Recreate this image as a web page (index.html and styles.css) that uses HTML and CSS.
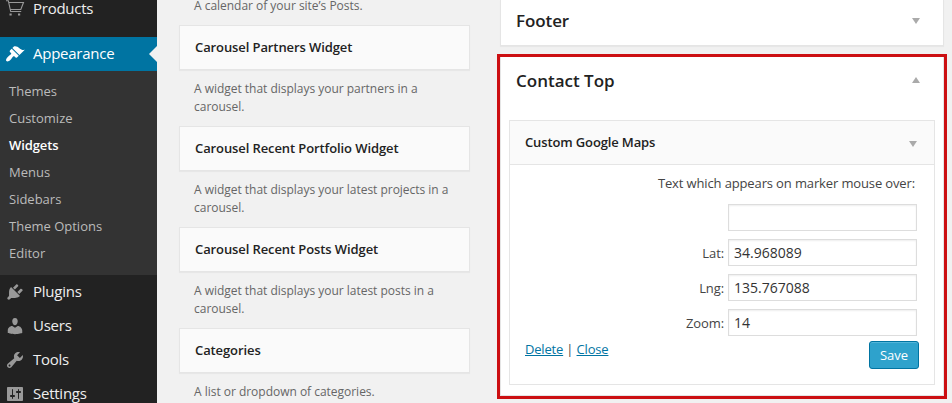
FILE: index.html
```html
<!DOCTYPE html>
<html lang="en">
<head>
<meta charset="utf-8">
<title>Widgets</title>
<link rel="stylesheet" href="styles.css">
</head>
<body>
<div class="app">
  <nav class="sidebar">
    <a class="item item-products">
      <svg class="icon" viewBox="0 0 20 20"><path class="line" d="M1 1.700h2.300l2.400 10.800h10.500M4 3.500h14.500l-2.700 7H5.500"/><rect x="4.500" y="14.500" width="2.200" height="2"/><rect x="13" y="14.500" width="2.200" height="2"/></svg>
      <span>Products</span>
    </a>
    <a class="item current">
      <svg class="icon" viewBox="0 0 20 20"><path d="M14.480 11.060L7.410 3.990l1.500-1.500c.5-.56 2.300-.47 3.510.32 1.210.8 1.430 1.280 2.910 2.100 1.180.64 2.450 1.260 4.450.85zm-.71.71L6.700 4.700 4.930 6.470c-.39.39-.39 1.020 0 1.410l1.060 1.060c.39.39.39 1.030 0 1.420-.6.6-1.430 1.110-2.210 1.690-.35.26-.7.53-1.010.84C1.430 14.230.4 16.080 1.400 17.070c.99 1 2.840-.03 4.180-1.360.31-.31.580-.66.850-1.020.57-.78 1.080-1.610 1.690-2.210.39-.39 1.020-.39 1.410 0l1.060 1.060c.39.39 1.020.39 1.410 0z"/></svg>
      <span>Appearance</span>
    </a>
    <div class="submenu">
      <a>Themes</a><a>Customize</a><a class="active">Widgets</a><a>Menus</a><a>Sidebars</a><a>Theme Options</a><a>Editor</a>
    </div>
    <a class="item">
      <svg class="icon" viewBox="0 0 20 20"><path d="M13.110 4.360L9.870 7.600 8 5.730l3.240-3.240c.35-.34 1.050-.2 1.560.32.520.51.660 1.210.310 1.550zm-8 1.770l.91-1.120 9.010 9.010-1.190.84c-.71.71-2.630 1.160-3.820 1.160H6.140L4.900 17.260c-.59.59-1.540.59-2.120 0-.59-.58-.59-1.530 0-2.120l1.240-1.240v-3.880c0-1.130.4-3.190 1.090-3.890zm7.260 3.970l3.240-3.240c.34-.35 1.040-.21 1.550.31.520.51.660 1.210.31 1.550l-3.240 3.250z"/></svg>
      <span>Plugins</span>
    </a>
    <a class="item">
      <svg class="icon" viewBox="0 0 20 20"><path d="M10 9.250c-2.270 0-2.730-3.440-2.730-3.440C7 4.020 7.820 2 9.970 2c2.160 0 2.980 2.020 2.710 3.810 0 0-.41 3.440-2.680 3.440zm0 2.570L12.720 10c2.390 0 4.520 2.330 4.520 4.530v2.490s-3.650 1.130-7.240 1.130c-3.650 0-7.240-1.130-7.240-1.130v-2.490c0-2.250 1.940-4.480 4.470-4.480z"/></svg>
      <span>Users</span>
    </a>
    <a class="item">
      <svg class="icon" viewBox="0 0 20 20"><path d="M16.680 9.770c-1.340 1.340-3.300 1.670-4.950.99l-5.410 6.520c-.99.99-2.590.99-3.580 0s-.99-2.590 0-3.570l6.520-5.420c-.68-1.650-.35-3.610.99-4.950 1.280-1.280 3.120-1.620 4.720-1.060l-2.890 2.890 2.820 2.820 2.860-2.870c.53 1.580.18 3.390-1.080 4.650zM3.810 16.210c.4.390 1.040.39 1.430 0 .4-.4.400-1.040 0-1.430-.39-.4-1.030-.4-1.430 0-.39.390-.39 1.030 0 1.430z"/></svg>
      <span>Tools</span>
    </a>
    <a class="item">
      <svg class="icon" viewBox="0 0 20 20"><path d="M18 16V4c0-.55-.45-1-1-1H3c-.55 0-1 .45-1 1v12c0 .55.450 1 1 1h14c.55 0 1-.45 1-1zM8 11h1c.55 0 1 .45 1 1s-.45 1-1 1H8v1.500c0 .28-.22.5-.5.5s-.5-.22-.5-.5V13H6c-.55 0-1-.45-1-1s.45-1 1-1h1V5.500c0-.28.22-.5.5-.5s.5.22.5.500V11zm5-2h-1c-.55 0-1-.45-1-1s.45-1 1-1h1V5.500c0-.28.22-.5.5-.5s.5.22.5.500V7h1c.55 0 1 .45 1 1s-.45 1-1 1h-1v5.500c0 .28-.22.5-.5.5s-.5-.22-.5-.5V9z"/></svg>
      <span>Settings</span>
    </a>
  </nav>

  <section class="available">
    <p class="desc">A calendar of your site’s Posts.</p>
    <h3 class="widget">Carousel Partners Widget</h3>
    <p class="desc">A widget that displays your partners in a carousel.</p>
    <h3 class="widget">Carousel Recent Portfolio Widget</h3>
    <p class="desc">A widget that displays your latest projects in a carousel.</p>
    <h3 class="widget">Carousel Recent Posts Widget</h3>
    <p class="desc">A widget that displays your latest posts in a carousel.</p>
    <h3 class="widget">Categories</h3>
    <p class="desc">A list or dropdown of categories.</p>
  </section>

  <main class="areas">
    <section class="area footer-area">
      <h2 class="area-title">Footer<i class="arrow"></i></h2>
    </section>
    <section class="highlight">
      <div class="area contact-area">
        <h2 class="area-title">Contact Top<i class="arrow up"></i></h2>
        <div class="instance">
          <h3 class="instance-title">Custom Google Maps<i class="arrow"></i></h3>
          <form class="form">
            <label class="caption" for="marker">Text which appears on marker mouse over:</label>
            <div class="row"><input id="marker" type="text"></div>
            <div class="row"><label for="lat">Lat:</label><input id="lat" type="text" value="34.968089"></div>
            <div class="row"><label for="lng">Lng:</label><input id="lng" type="text" value="135.767088"></div>
            <div class="row"><label for="zoom">Zoom:</label><input id="zoom" type="text" value="14"></div>
            <div class="actions">
              <div class="links"><a href="#">Delete</a> | <a href="#">Close</a></div>
              <button type="button" class="save">Save</button>
            </div>
          </form>
        </div>
      </div>
    </section>
  </main>
</div>
</body>
</html>
```
FILE: styles.css
```css
* { box-sizing: border-box; }
html, body { margin: 0; height: 100%; overflow: hidden; }
body {
  background: #f1f1f1;
  color: #444;
  font: 13px/18px "Open Sans", sans-serif;
}
h2, h3, p { margin: 0; }
.app {
  display: grid;
  grid-template-columns: 157px 291px 450px;
  height: 403px;
}
.sidebar { background: #222; overflow: hidden; }
.item {
  display: flex;
  align-items: center;
  height: 34px;
  padding-left: 5px;
  gap: 8px;
  color: #eee;
  font-size: 15px;
  letter-spacing: -0.25px;
}
.item span { padding-bottom: 2px; }
.item-products { margin: -8px 0 11px; }
.icon { width: 20px; height: 20px; fill: #999; flex: none; }
.line { fill: none; stroke: #999; stroke-width: 1.1; }
.current { position: relative; background: #0074a2; color: #fff; }
.current .icon { fill: #fff; }
.current::after {
  content: "";
  position: absolute;
  right: 0;
  top: 9px;
  border: 8px solid transparent;
  border-left: 0;
  border-right-color: #f1f1f1;
}
.submenu {
  display: flex;
  flex-direction: column;
  height: 204px;
  padding: 7px 0 8px 9px;
  background: #333;
  color: #bbb;
  font-size: 13px;
  line-height: 27px;
}
.submenu .active { color: #fff; font-weight: 600; letter-spacing: -0.1px; }

.available { margin-left: 22px; width: 291px; margin-top: -3px; }
.desc {
  padding: 0 15px;
  margin: 0 0 10px;
  color: #666;
  font-size: 12px;
  line-height: 18px;
  letter-spacing: -0.02px;
}
.widget {
  height: 45px;
  margin-bottom: 10px;
  padding: 0 15px;
  border: 1px solid #e5e5e5;
  background: #fafafa;
  box-shadow: 0 1px 1px rgba(0, 0, 0, .04);
  color: #222;
  font-size: 13px;
  font-weight: 600;
  line-height: 43px;
  letter-spacing: -0.1px;
}

.areas { margin-left: 49px; width: 450px; }
.area { background: #fff; border: 1px solid #e5e5e5; }
.area-title {
  display: flex;
  justify-content: space-between;
  align-items: center;
  color: #222;
  font-size: 17px;
  font-weight: 600;
}
.footer-area {
  height: 46px;
  margin: 0 3px 8px;
  border-top: 0;
  padding: 0 23px 0 15px;
  box-shadow: 0 1px 1px rgba(0, 0, 0, .04);
}
.footer-area .area-title { height: 41px; letter-spacing: -0.1px; }
.highlight { height: 345px; border: 3px solid #cc0f12; }
.contact-area { height: 339px; padding: 0 8px; border-top: 0; }
.contact-area .area-title { height: 48px; margin-bottom: 15px; padding: 0 15px 0 7px; }
.arrow {
  width: 0;
  height: 0;
  border: 4px solid transparent;
  border-top: 6px solid #aaa;
  border-bottom: 0;
}
.arrow.up { margin-top: -3px; border-top: 0; border-bottom: 6px solid #aaa; }
.instance { height: 265px; border: 1px solid #e5e5e5; }
.instance-title {
  display: flex;
  justify-content: space-between;
  align-items: center;
  height: 44px;
  padding: 0 17px 2px 15px;
  border-bottom: 1px solid #e5e5e5;
  background: #fafafa;
  color: #222;
  font-size: 13px;
  font-weight: 600;
  letter-spacing: -0.13px;
}
.instance-title .arrow { margin-top: 4px; }
.form { padding: 9px 17px 0 15px; }
.caption { display: block; height: 30px; text-align: right; padding-right: 2px; letter-spacing: -0.13px; }
.row {
  display: flex;
  justify-content: flex-end;
  align-items: center;
  gap: 4px;
  margin-bottom: 8px;
  letter-spacing: -0.1px;
}
input {
  width: 189px;
  height: 27px;
  margin: 0;
  padding: 3px 5px;
  border: 1px solid #ddd;
  background: #fff;
  box-shadow: inset 0 1px 2px rgba(0, 0, 0, .07);
  color: #333;
  font: 14px "Open Sans", sans-serif;
}
.actions { display: flex; justify-content: space-between; margin: -3px -2px 0 0; }
.links { margin-top: -1px; letter-spacing: -0.18px; }
.links a { color: #0074a2; }
.save {
  width: 50px;
  height: 28px;
  padding: 0;
  border: 1px solid #0074a2;
  border-radius: 3px;
  background: #2ea2cc;
  box-shadow: inset 0 1px 0 rgba(120, 200, 230, .5);
  color: #fff;
  font: 13px/26px "Open Sans", sans-serif;
}
```
